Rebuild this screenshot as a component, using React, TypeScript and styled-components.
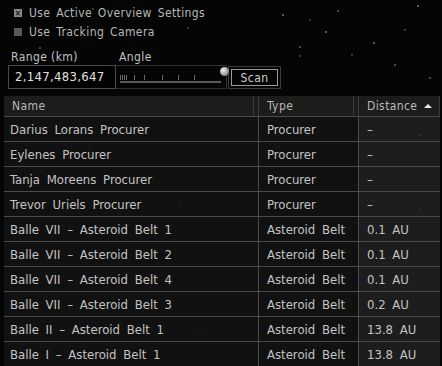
import React from "react";
import styled, { createGlobalStyle } from "styled-components";

const GlobalStyle = createGlobalStyle`
  html, body {
    margin: 0;
    padding: 0;
    background: #050505;
  }
  body {
    font-family: "DejaVu Sans Condensed", "DejaVu Sans", sans-serif;
    color: #c8c8c8;
  }
`;

const Page = styled.div`
  position: relative;
  width: 442px;
  height: 366px;
  overflow: hidden;
  background: #050505;
`;

const Stars = styled.svg`
  position: absolute;
  inset: 0;
  pointer-events: none;
`;

const Content = styled.div`
  position: relative;
  display: flex;
  flex-direction: column;
`;

const Options = styled.div`
  display: flex;
  flex-direction: column;
  padding: 5px 0 0 14px;
  gap: 3px;
`;

const CheckRow = styled.label`
  display: flex;
  align-items: center;
  gap: 7px;
  height: 16px;
  font-size: 12px;
  letter-spacing: 0.4px;
  word-spacing: 2px;
  color: #b8b8b8;
`;

const Box = styled.span<{ $checked?: boolean }>`
  width: 8px;
  height: 8px;
  background: ${({ $checked }) => ($checked ? "#8a8a8a" : "#5a5a5a")};
  display: flex;
  align-items: center;
  justify-content: center;
  font-size: 9px;
  line-height: 8px;
  color: #1a1a1a;
  font-weight: bold;
`;

const Controls = styled.div`
  display: flex;
  align-items: flex-end;
  padding: 10px 0 0 8px;
`;

const Field = styled.div`
  display: flex;
  flex-direction: column;
`;

const FieldLabel = styled.span`
  font-size: 12px;
  letter-spacing: 0.4px;
  color: #c0c0c0;
  padding-left: 3px;
  height: 14px;
  line-height: 14px;
  margin-bottom: 1px;
`;

const RangeInput = styled.div`
  height: 22px;
  border: 1px solid #4a4a4a;
  background: rgba(0, 0, 0, 0.6);
  color: #e0e0e0;
  font-size: 13px;
  letter-spacing: 0.3px;
  line-height: 22px;
  padding-left: 6px;
  box-sizing: content-box;
  width: 100px;
`;

const SliderBox = styled.div`
  position: relative;
  width: 110px;
  height: 22px;
  border: 1px solid #2e2e2e;
  border-left: none;
`;

const Track = styled.div`
  position: absolute;
  left: 4px;
  right: 5px;
  bottom: 5px;
  height: 2px;
  background: #5a5a5a;
`;

const Tick = styled.div`
  position: absolute;
  bottom: 8px;
  width: 1px;
  height: 5px;
  background: #6a6a6a;
`;

const Knob = styled.div`
  position: absolute;
  right: -3px;
  top: 1px;
  width: 9px;
  height: 9px;
  border-radius: 50%;
  background: radial-gradient(circle at 35% 35%, #f0f0f0, #9a9a9a 60%, #555 100%);
`;

const ScanButton = styled.div`
  margin-left: 1px;
  width: 53px;
  height: 23px;
  border: 1px solid #3c3c3c;
  display: flex;
  align-items: center;
  justify-content: center;
  box-sizing: border-box;
`;

const ScanInner = styled.div`
  width: 47px;
  height: 17px;
  border: 1px solid #9a9a9a;
  box-sizing: border-box;
  display: flex;
  align-items: center;
  justify-content: center;
  font-size: 12px;
  letter-spacing: 0.5px;
  color: #d0d0d0;
`;

const Table = styled.div`
  margin: 7px 2px 0 4px;
  display: grid;
  grid-template-columns: 254px 100px 82px;
`;

const HeadCell = styled.div<{ $last?: boolean }>`
  position: relative;
  height: 21px;
  background: #1b1d1b;
  border-bottom: 1px solid #4a4a4a;
  box-sizing: border-box;
  display: flex;
  align-items: center;
  padding-left: 8px;
  font-size: 12px;
  letter-spacing: 0.4px;
  color: #b8b8b8;
  border-left: 1px solid #3a3a3a;
  &:first-child {
    border-left: none;
  }
  ${({ $last }) => ($last ? "border-right: 1px solid #3a3a3a;" : "")}
`;

const Grip = styled.span`
  position: absolute;
  right: 4px;
  top: 0;
  bottom: 0;
  width: 1px;
  background: #3a3a3a;
`;

const SortArrow = styled.span`
  position: absolute;
  right: 7px;
  top: 8px;
  width: 0;
  height: 0;
  border-left: 4px solid transparent;
  border-right: 4px solid transparent;
  border-bottom: 4px solid #e8e8e8;
`;

const Cell = styled.div<{ $sorted?: boolean; $first?: boolean }>`
  height: 25px;
  box-sizing: border-box;
  border-bottom: 1px solid #4a4a4a;
  border-left: ${({ $first }) => ($first ? "none" : "1px solid #4a4a4a")};
  background: ${({ $sorted }) => ($sorted ? "rgba(40,40,40,0.7)" : "rgba(22,22,22,0.75)")};
  display: flex;
  align-items: center;
  padding-left: ${({ $first }) => ($first ? "6px" : "8px")};
  font-size: 13px;
  letter-spacing: 0;
  word-spacing: 3px;
  color: #c4c4c4;
  white-space: nowrap;
  overflow: hidden;
`;

const rows: [string, string, string][] = [
  ["Darius Lorans Procurer", "Procurer", "–"],
  ["Eylenes Procurer", "Procurer", "–"],
  ["Tanja Moreens Procurer", "Procurer", "–"],
  ["Trevor Uriels Procurer", "Procurer", "–"],
  ["Balle VII – Asteroid Belt 1", "Asteroid Belt", "0.1 AU"],
  ["Balle VII – Asteroid Belt 2", "Asteroid Belt", "0.1 AU"],
  ["Balle VII – Asteroid Belt 4", "Asteroid Belt", "0.1 AU"],
  ["Balle VII – Asteroid Belt 3", "Asteroid Belt", "0.2 AU"],
  ["Balle II – Asteroid Belt 1", "Asteroid Belt", "13.8 AU"],
  ["Balle I – Asteroid Belt 1", "Asteroid Belt", "13.8 AU"],
];

const stars: [number, number, number][] = [
  [40, 48, 0.4], [93, 9, 0.3], [188, 28, 0.3], [283, 15, 0.5], [300, 47, 0.4],
  [326, 32, 0.5], [338, 11, 0.4], [374, 43, 0.5], [395, 65, 0.4], [418, 6, 0.5],
  [430, 78, 0.4], [300, 56, 0.3], [310, 20, 0.3], [352, 55, 0.3], [405, 30, 0.3],
  [90, 150, 0.3], [180, 205, 0.3], [300, 180, 0.3], [420, 135, 0.4], [200, 330, 0.3],
  [315, 350, 0.3], [420, 210, 0.3], [60, 280, 0.3], [250, 120, 0.3],
];

const ticks = [4, 6, 8, 10, 18, 28, 46, 62, 78];

const App: React.FC = () => {
  return (
    <Page>
      <GlobalStyle />
      <Stars width="442" height="366">
        {stars.map(([x, y, o], i) => (
          <circle key={i} cx={x} cy={y} r="0.9" fill="#ffffff" opacity={o} />
        ))}
      </Stars>
      <Content>
        <Options>
          <CheckRow>
            <Box $checked>×</Box>
            Use Active Overview Settings
          </CheckRow>
          <CheckRow>
            <Box />
            Use Tracking Camera
          </CheckRow>
        </Options>
        <Controls>
          <Field>
            <FieldLabel>Range (km)</FieldLabel>
            <RangeInput>2,147,483,647</RangeInput>
          </Field>
          <Field>
            <FieldLabel>Angle</FieldLabel>
            <SliderBox>
              {ticks.map((t) => (
                <Tick key={t} style={{ left: t }} />
              ))}
              <Track />
              <Knob />
            </SliderBox>
          </Field>
          <ScanButton>
            <ScanInner>Scan</ScanInner>
          </ScanButton>
        </Controls>
        <Table>
          <HeadCell>
            Name
            <Grip />
          </HeadCell>
          <HeadCell>
            Type
            <Grip />
          </HeadCell>
          <HeadCell $last>
            Distance
            <SortArrow />
          </HeadCell>
          {rows.map(([name, type, dist]) => (
            <React.Fragment key={name}>
              <Cell $first>{name}</Cell>
              <Cell>{type}</Cell>
              <Cell $sorted>{dist}</Cell>
            </React.Fragment>
          ))}
        </Table>
      </Content>
    </Page>
  );
};

export default App;
